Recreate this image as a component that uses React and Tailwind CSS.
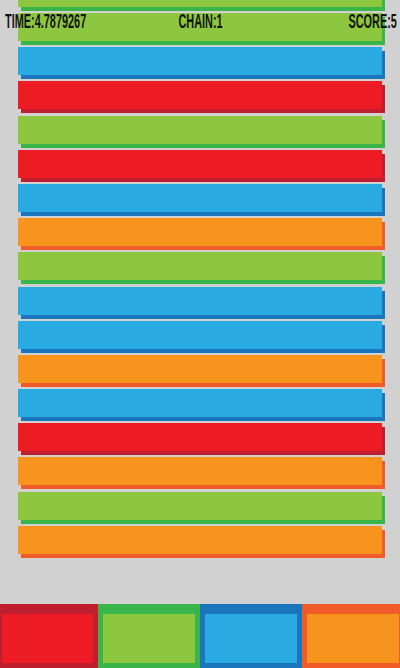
const palette = {
  green: 'bg-[#8dc63f] shadow-[3px_4px_0_#39b54a]',
  blue: 'bg-[#29abe2] shadow-[3px_4px_0_#1b75bc]',
  red: 'bg-[#ed1c24] shadow-[3px_4px_0_#be1e2d]',
  orange: 'bg-[#f7941d] shadow-[3px_4px_0_#f15a29]',
};

const bars = [
  'green', 'green', 'blue', 'red', 'green', 'red', 'blue', 'orange', 'green',
  'blue', 'blue', 'orange', 'blue', 'red', 'orange', 'green', 'orange',
];

const buttons = [
  { key: 'red', cls: 'w-[101px] -ml-[3px] bg-[#ed1c24] border-[#be1e2d]' },
  { key: 'green', cls: 'w-[102px] bg-[#8dc63f] border-[#39b54a]' },
  { key: 'blue', cls: 'w-[102px] bg-[#29abe2] border-[#1b75bc]' },
  { key: 'orange', cls: 'w-[102px] bg-[#f7941d] border-[#f15a29]' },
];

const Stat = ({ children, origin }) => (
  <div
    className={`font-['Liberation_Sans',Arial,sans-serif] font-bold text-[20px] leading-none text-[#141414] whitespace-nowrap scale-x-[0.545] ${origin}`}
  >
    {children}
  </div>
);

export default function App() {
  return (
    <div className="relative w-[400px] h-[668px] bg-[#d1d1d1] flex flex-col overflow-hidden">
      <div className="flex-1 overflow-hidden">
        <div className="flex flex-col gap-[6.2px] -mt-[21.2px]">
          {bars.map((color, index) => (
            <div key={index} className={`ml-[18px] w-[364px] h-[28px] ${palette[color]}`} />
          ))}
        </div>
      </div>

      <div className="absolute top-[11px] left-[5px] right-[3px] flex justify-between items-start">
        <div className="w-[100px]">
          <Stat origin="origin-left">TIME:4.7879267</Stat>
        </div>
        <div className="w-[100px] flex justify-center">
          <Stat origin="origin-center">CHAIN:1</Stat>
        </div>
        <div className="w-[100px] flex justify-end">
          <Stat origin="origin-right">SCORE:5</Stat>
        </div>
      </div>

      <div className="flex h-[64px] shrink-0">
        {buttons.map((b) => (
          <div key={b.key} className={`h-full shrink-0 border-x-[5px] border-t-[10px] border-b-[5px] ${b.cls}`} />
        ))}
      </div>
    </div>
  );
}
